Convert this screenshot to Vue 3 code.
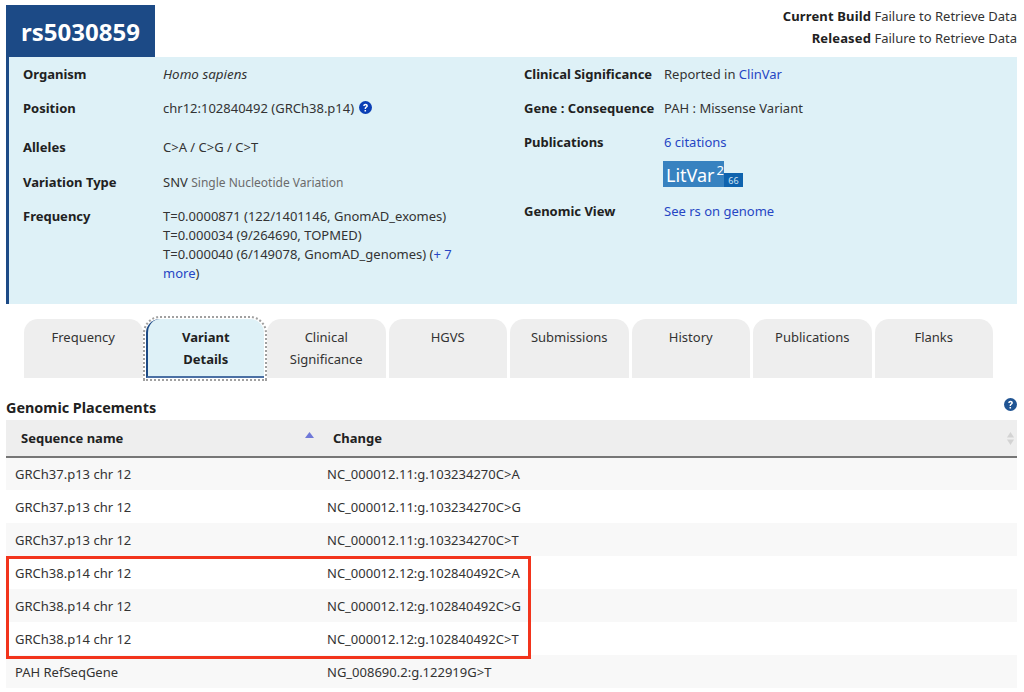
<template>
  <div class="page">
    <header class="top">
      <h1 class="rs-title">rs5030859</h1>
      <div class="build">
        <div><b>Current Build</b> Failure to Retrieve Data</div>
        <div><b>Released</b> Failure to Retrieve Data</div>
      </div>
    </header>

    <section class="summary">
      <div class="summary-col left">
        <div class="row r-34">
          <span class="label">Organism</span>
          <span class="val"><i>Homo sapiens</i></span>
        </div>
        <div class="row r-39">
          <span class="label">Position</span>
          <span class="val">
            chr12:102840492 (GRCh38.p14)
            <svg class="help" width="13" height="13" viewBox="0 0 16 16">
              <circle cx="8" cy="8" r="8" fill="#0b3fb5" />
              <path d="M5.2 6.2c0-1.7 1.3-2.7 2.9-2.7 1.6 0 2.8 1 2.8 2.4 0 1.2-.7 1.8-1.5 2.3-.6.4-.8.6-.8 1.2v.3H6.900v-.5c0-1 .4-1.500 1.100-2 .6-.4 1-.7 1-1.200 0-.5-.4-.9-1-.9-.6 0-1 .4-1.100 1.100H5.200zM6.800 11h1.900v1.800H6.800z" fill="#fff" />
            </svg>
          </span>
        </div>
        <div class="row r-35">
          <span class="label">Alleles</span>
          <span class="val">C&gt;A / C&gt;G / C&gt;T</span>
        </div>
        <div class="row r-34">
          <span class="label">Variation Type</span>
          <span class="val">SNV <small>Single Nucleotide Variation</small></span>
        </div>
        <div class="row">
          <span class="label">Frequency</span>
          <span class="val freq">
            <span>T=0.0000871 (122/1401146, GnomAD_exomes)</span>
            <span>T=0.000034 (9/264690, TOPMED)</span>
            <span>T=0.000040 (6/149078, GnomAD_genomes) (<a>+ 7 more</a>)</span>
          </span>
        </div>
      </div>
      <div class="summary-col right">
        <div class="row r-34">
          <span class="label">Clinical Significance</span>
          <span class="val">Reported in <a>ClinVar</a></span>
        </div>
        <div class="row r-34">
          <span class="label">Gene : Consequence</span>
          <span class="val">PAH : Missense Variant</span>
        </div>
        <div class="row r-pub">
          <span class="label">Publications</span>
          <span class="val">
            <a>6 citations</a>
            <span class="litvar">
              <span class="litvar-name">LitVar<sup>2</sup></span><span class="litvar-count">66</span>
            </span>
          </span>
        </div>
        <div class="row">
          <span class="label">Genomic View</span>
          <span class="val"><a>See rs on genome</a></span>
        </div>
      </div>
    </section>

    <nav class="tabs">
      <div
        v-for="tab in tabs"
        :key="tab.name"
        class="tab"
        :class="{ active: tab.active }"
      >
        {{ tab.name }}
      </div>
    </nav>

    <div class="table-head">
      <h2>Genomic Placements</h2>
      <svg width="13" height="13" viewBox="0 0 16 16">
        <circle cx="8" cy="8" r="8" fill="#205493" />
        <path d="M5.2 6.2c0-1.7 1.3-2.7 2.900-2.700 1.600 0 2.800 1 2.800 2.400 0 1.200-.7 1.800-1.500 2.300-.6.4-.8.6-.8 1.200v.3H6.900v-.5c0-1 .4-1.500 1.100-2 .6-.4 1-.7 1-1.200 0-.5-.4-.9-1-.9-.6 0-1 .4-1.100 1.100H5.200zM6.800 11h1.900v1.800H6.800z" fill="#fff" />
      </svg>
    </div>

    <div class="table-wrap">
      <table>
        <thead>
          <tr>
            <th class="c1">
              Sequence name
              <svg class="sort-up" width="9" height="6" viewBox="0 0 9 6"><path d="M4.500 0 9 6H0z" fill="#6f78d8" /></svg>
            </th>
            <th class="c2">
              Change
              <svg class="sort-both" width="7" height="13" viewBox="0 0 7 13">
                <path d="M3.500 0 7 5.500H0z" fill="#d3d3d3" />
                <path d="M3.500 13 0 7.500h7z" fill="#d3d3d3" />
              </svg>
            </th>
          </tr>
        </thead>
        <tbody>
          <tr v-for="(r, i) in rows" :key="i">
            <td>{{ r[0] }}</td>
            <td>{{ r[1] }}</td>
          </tr>
        </tbody>
      </table>
      <div class="callout"></div>
    </div>
  </div>
</template>

<script setup>
const tabs = [
  { name: 'Frequency' },
  { name: 'Variant Details', active: true },
  { name: 'Clinical Significance' },
  { name: 'HGVS' },
  { name: 'Submissions' },
  { name: 'History' },
  { name: 'Publications' },
  { name: 'Flanks' }
]

const rows = [
  ['GRCh37.p13 chr 12', 'NC_000012.11:g.103234270C>A'],
  ['GRCh37.p13 chr 12', 'NC_000012.11:g.103234270C>G'],
  ['GRCh37.p13 chr 12', 'NC_000012.11:g.103234270C>T'],
  ['GRCh38.p14 chr 12', 'NC_000012.12:g.102840492C>A'],
  ['GRCh38.p14 chr 12', 'NC_000012.12:g.102840492C>G'],
  ['GRCh38.p14 chr 12', 'NC_000012.12:g.102840492C>T'],
  ['PAH RefSeqGene', 'NG_008690.2:g.122919G>T']
]
</script>

<style>
html, body {
  margin: 0;
  background: #fff;
  overflow: hidden;
}
</style>

<style scoped>
.page {
  width: 1017px;
  height: 692px;
  padding: 5px 0 0 6px;
  box-sizing: border-box;
  overflow: hidden;
  font-family: "Noto Sans", sans-serif;
  font-size: 13px;
  line-height: 20px;
  color: #333;
}

.top {
  display: flex;
  justify-content: space-between;
  height: 52px;
}

.rs-title {
  margin: 0;
  width: 149px;
  height: 52px;
  background: #1c4a86;
  color: #fff;
  font-size: 24px;
  font-weight: 700;
  line-height: 54px;
  text-align: center;
}

.build {
  text-align: right;
  line-height: 22px;
}

.build b {
  color: #212121;
  letter-spacing: 0.15px;
}

.summary {
  display: flex;
  height: 247px;
  background: #def1f7;
  border-left: 3px solid #1c4a86;
  box-sizing: border-box;
  padding-top: 7px;
}

.summary-col.left {
  width: 498px;
  padding-left: 14px;
  box-sizing: border-box;
}

.summary-col.right {
  flex: 1;
  padding-left: 17px;
}

.row {
  display: flex;
}

.r-34 {
  height: 34px;
}

.r-35 {
  height: 35px;
}

.r-39 {
  height: 39px;
}

.r-pub {
  height: 69px;
}

.label {
  flex: none;
  width: 140px;
  font-weight: 700;
  color: #212121;
}

.val {
  flex: 1;
}

.val i {
  font-size: 13.400px;
}

.left .val {
  max-width: 295px;
}

.val small {
  font-size: 12px;
  color: #6b6b6b;
}

.help {
  vertical-align: -1px;
  margin-left: 1px;
}

.freq {
  padding-top: 1px;
  line-height: 19px;
}

.freq span {
  display: block;
}

a {
  color: #2646c4;
}

.litvar {
  display: flex;
  align-items: flex-end;
  margin: 9px 0 0 -1px;
  height: 26px;
}

.litvar-name {
  background: #3782c0;
  color: #fff;
  width: 61px;
  height: 26px;
  box-sizing: border-box;
  padding-left: 3px;
  font-size: 18px;
  line-height: 28px;
}

.litvar-name sup {
  font-size: 13px;
  line-height: 0;
  margin-left: 2px;
}

.litvar-count {
  background: #0f63ae;
  color: #cfe3f3;
  width: 19px;
  height: 14px;
  font-size: 9px;
  line-height: 16px;
  text-align: center;
}

.tabs {
  display: flex;
  gap: 3px;
  height: 59px;
  margin-top: 15px;
  padding-left: 18px;
}

.tab {
  width: 118.500px;
  height: 59px;
  padding: 7px 10px 0;
  box-sizing: border-box;
  background: #eee;
  border-radius: 14px 14px 0 0;
  text-align: center;
  line-height: 22px;
  color: #333;
}

.tab.active {
  padding: 7px 30px 0;
  background: #def1f7;
  border-left: 2px solid #1c4a86;
  border-bottom: 2px solid #4a70a4;
  outline: 2px dotted #a0a0a0;
  outline-offset: 1px;
  font-weight: 700;
  color: #212121;
}

.table-head {
  display: flex;
  justify-content: space-between;
  align-items: center;
  height: 42px;
  padding-top: 10px;
  box-sizing: border-box;
}

.table-head h2 {
  margin: 8px 0 0;
  font-size: 14.400px;
  font-weight: 700;
  color: #212121;
}

.table-wrap {
  position: relative;
}

table {
  width: 100%;
  border-collapse: collapse;
  table-layout: fixed;
}

th {
  position: relative;
  height: 36px;
  padding: 0 0 0 15px;
  background: #eee;
  border-bottom: 2px solid #767676;
  text-align: left;
  font-weight: 700;
  color: #212121;
}

th.c1 {
  width: 297px;
}

.sort-up {
  position: absolute;
  right: 4px;
  top: 12px;
}

.sort-both {
  position: absolute;
  right: 3px;
  top: 12px;
}

td {
  height: 33px;
  padding: 0 0 0 9px;
  box-sizing: border-box;
}

tbody tr:nth-child(odd) {
  background: #f8f8f8;
}

.callout {
  position: absolute;
  left: 0;
  top: 136px;
  width: 525px;
  height: 103px;
  border: 3px solid #f2341c;
  box-sizing: border-box;
}
</style>
